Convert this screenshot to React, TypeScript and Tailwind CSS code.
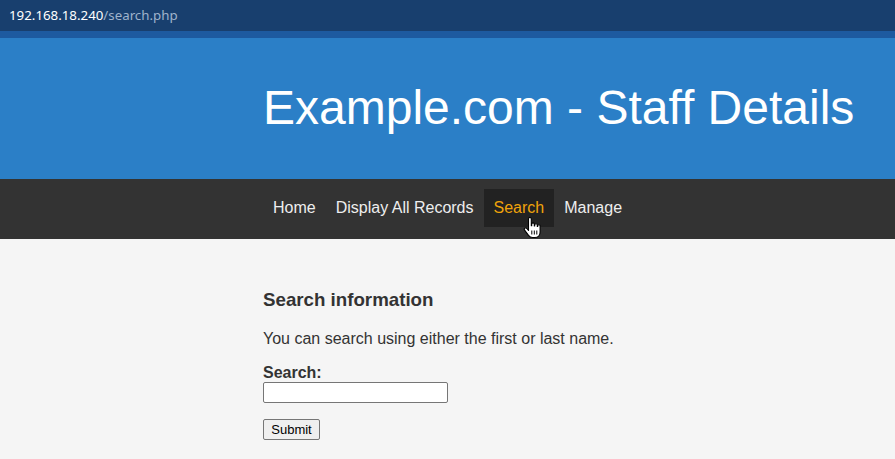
export default function App() {
  const navItems = ['Home', 'Display All Records', 'Search', 'Manage'];

  return (
    <div className="w-[895px] h-[459px] overflow-hidden bg-[#f5f5f5] font-['Liberation_Sans',Arial,sans-serif]">
      {/* Browser address bar */}
      <div className="h-[31px] bg-[#183f6e] flex items-center pl-[9px] font-['Noto_Sans',sans-serif] text-[13.3px]">
        <span className="text-white">192.168.18.240</span>
        <span className="text-[#9fb3cc]">/search.php</span>
      </div>
      <div className="h-[7px] bg-[#1d5aa0]" />

      {/* Header */}
      <header className="h-[141px] bg-[#2b7fc7] flex items-center pl-[263px]">
        <h1 className="text-white text-[48px] leading-none whitespace-nowrap pb-[2px]">
          Example.com - Staff Details
        </h1>
      </header>

      {/* Nav */}
      <nav className="h-[60px] bg-[#333333] flex items-center pl-[263px] pb-[2px]">
        {navItems.map((item) => (
          <div key={item} className="relative">
            <a
              className={`block px-[10px] h-[38px] leading-[37px] text-[16px] ${
                item === 'Search' ? 'bg-[#222222] text-[#f0a30a]' : 'text-[#eeeeee]'
              }`}
            >
              {item}
            </a>
            {item === 'Search' && (
              <svg
                className="absolute left-[39px] top-[28px]"
                width="19"
                height="22"
                viewBox="0 0 19 22"
              >
                <path
                  d="M5.5 2c0-1 .7-1.5 1.4-1.5S8.3 1 8.3 2v6.8h.4V7.2c0-.9.7-1.3 1.3-1.3s1.3.4 1.3 1.3v1.8h.4V8c0-.9.7-1.3 1.3-1.3s1.3.4 1.3 1.3v1.4h.4V8.9c0-.8.6-1.2 1.2-1.2s1.2.4 1.2 1.2v6c0 3-1.9 5.6-5.2 5.6H9.6c-2 0-3.2-.9-4.3-2.4L1.6 13.1c-.6-.8-.4-1.6.2-2 .6-.4 1.4-.3 2 .4l1.7 2V2z"
                  fill="#ffffff"
                  stroke="#000000"
                  strokeWidth="1.1"
                  strokeLinejoin="round"
                />
                <path d="M8.8 13.5v4M11.3 13.5v4M13.8 13.5v4" stroke="#000" strokeWidth="1" />
              </svg>
            )}
          </div>
        ))}
      </nav>

      {/* Content */}
      <main className="pl-[263px] pt-[50px] text-[#333333]">
        <h2 className="text-[18.72px] font-bold leading-[22px]">Search information</h2>
        <p className="text-[16px] leading-[20px] mt-[18px]">
          You can search using either the first or last name.
        </p>
        <form className="mt-[15px]">
          <label className="block text-[16px] font-bold leading-[18px]">Search:</label>
          <input
            type="text"
            className="block w-[185px] h-[21px] bg-white border border-[#767676] rounded-[2px] text-[13px] px-[2px]"
          />
          <button
            type="button"
            className="block mt-[16px] w-[57px] h-[21px] bg-[#efefef] border border-[#767676] rounded-[2px] text-[13px] leading-[19px] text-black font-['Liberation_Sans',Arial,sans-serif]"
          >
            Submit
          </button>
        </form>
      </main>
    </div>
  );
}
